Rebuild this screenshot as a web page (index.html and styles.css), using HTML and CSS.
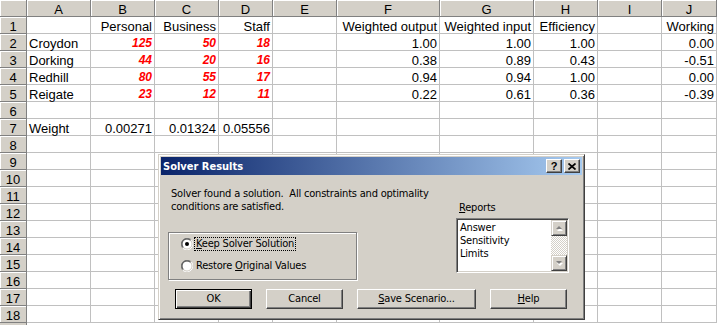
FILE: index.html
```html
<!DOCTYPE html>
<html lang="en">
<head>
    <meta charset="UTF-8">
    <meta name="viewport" content="width=device-width, initial-scale=1.0">
    <title>Solver Results</title>
    <link rel="stylesheet" href="styles.css">
</head>
<body>
    <div class="sheet" id="sheet"></div>

    <div class="dialog">
        <div class="titlebar">
            <span class="title">Solver Results</span>
            <span class="tb-btn">?</span>
            <span class="tb-btn">
                <svg width="8" height="7" viewBox="0 0 8 7"><path d="M0.5 0.5 L7.5 6.5 M7.5 0.5 L0.5 6.5" stroke="#000" stroke-width="1.7" fill="none"/></svg>
            </span>
        </div>

        <div class="dlg-body">
            <div class="dlg-left">
                <p class="message">Solver found a solution.&nbsp; All constraints and optimality<br>conditions are satisfied.</p>
                <div class="group">
                    <div class="radio">
                        <svg width="12" height="12" viewBox="0 0 12 12">
                            <circle cx="6" cy="6" r="5" fill="#fff"/>
                            <path d="M10.24 1.76 A6 6 0 0 0 1.76 10.24" stroke="#808080" fill="none"/>
                            <path d="M1.76 10.24 A6 6 0 0 0 10.24 1.76" stroke="#fff" fill="none"/>
                            <path d="M9.54 2.46 A5 5 0 0 0 2.46 9.54" stroke="#404040" fill="none"/>
                            <path d="M2.46 9.54 A5 5 0 0 0 9.54 2.46" stroke="#d4d0c8" fill="none"/>
                            <circle cx="6" cy="6" r="2" fill="#000"/>
                        </svg>
                        <span class="focus"><u>K</u>eep Solver Solution</span>
                    </div>
                    <div class="radio">
                        <svg width="12" height="12" viewBox="0 0 12 12">
                            <circle cx="6" cy="6" r="5" fill="#fff"/>
                            <path d="M10.24 1.76 A6 6 0 0 0 1.76 10.24" stroke="#808080" fill="none"/>
                            <path d="M1.76 10.24 A6 6 0 0 0 10.24 1.76" stroke="#fff" fill="none"/>
                            <path d="M9.54 2.46 A5 5 0 0 0 2.46 9.54" stroke="#404040" fill="none"/>
                            <path d="M2.46 9.54 A5 5 0 0 0 9.54 2.46" stroke="#d4d0c8" fill="none"/>
                        </svg>
                        <span class="label">Restore <u>O</u>riginal Values</span>
                    </div>
                </div>
            </div>

            <div class="dlg-right">
                <div class="reports-label"><u>R</u>eports</div>
                <div class="listbox">
                    <ul class="items">
                        <li>Answer</li>
                        <li>Sensitivity</li>
                        <li>Limits</li>
                    </ul>
                    <div class="scrollbar">
                        <span class="sb-btn">
                            <svg width="8" height="5" viewBox="0 0 8 5"><path d="M4 1 L7 4 L1 4 Z" fill="#fff" transform="translate(1 1)"/><path d="M4 0 L7 3 L1 3 Z" fill="#808080"/></svg>
                        </span>
                        <span class="sb-track"></span>
                        <span class="sb-btn">
                            <svg width="8" height="5" viewBox="0 0 8 5"><path d="M1 1 L7 1 L4 4 Z" fill="#fff" transform="translate(1 1)"/><path d="M1 0 L7 0 L4 3 Z" fill="#808080"/></svg>
                        </span>
                    </div>
                </div>
            </div>
        </div>

        <div class="buttons">
            <span class="btn default">OK</span>
            <span class="btn">Cancel</span>
            <span class="btn wide"><u>S</u>ave Scenario...</span>
            <span class="btn"><u>H</u>elp</span>
        </div>
    </div>

    <script>
        const columnas = ['A', 'B', 'C', 'D', 'E', 'F', 'G', 'H', 'I', 'J'];
        const datos = {
            1: ['', 'Personal', 'Business', 'Staff', '', 'Weighted output', 'Weighted input', 'Efficiency', '', 'Working'],
            2: ['Croydon', '125', '50', '18', '', '1.00', '1.00', '1.00', '', '0.00'],
            3: ['Dorking', '44', '20', '16', '', '0.38', '0.89', '0.43', '', '-0.51'],
            4: ['Redhill', '80', '55', '17', '', '0.94', '0.94', '1.00', '', '0.00'],
            5: ['Reigate', '23', '12', '11', '', '0.22', '0.61', '0.36', '', '-0.39'],
            7: ['Weight', '0.00271', '0.01324', '0.05556', '', '', '', '', '', '']
        };

        const sheet = document.getElementById('sheet');
        let html = '<div class="cell head"></div>';
        columnas.forEach(c => html += `<div class="cell head">${c}</div>`);

        for (let r = 1; r <= 18; r++) {
            html += `<div class="cell head">${r}</div>`;
            const fila = datos[r] || [];
            for (let c = 0; c < columnas.length; c++) {
                const valor = fila[c] || '';
                let clase = 'cell';
                if (c > 0) clase += ' num';
                if (r >= 2 && r <= 5 && c >= 1 && c <= 3) clase += ' input';
                html += `<div class="${clase}">${valor}</div>`;
            }
        }
        sheet.innerHTML = html;
    </script>
</body>
</html>
```

FILE: styles.css
```css
* {
    box-sizing: border-box;
}
body {
    margin: 0;
    width: 717px;
    height: 325px;
    overflow: hidden;
    position: relative;
    background: #fff;
    font-family: 'Liberation Sans', Arial, sans-serif;
    color: #000;
}

/* hoja de calculo */
.sheet {
    display: grid;
    grid-template-columns: 27px 64px 64px 64px 54px 64px 103px 94px 64px 64px 55px;
    grid-auto-rows: 17px;
    height: 325px;
    font-size: 13px;
    background: linear-gradient(to right, #d4d0c8 26px, #808080 26px, #808080 27px, #fff 27px);
}
.cell {
    border-right: 1px solid #c0c0c0;
    border-bottom: 1px solid #c0c0c0;
    padding: 0 2px;
    line-height: 19px;
    white-space: nowrap;
}
.cell.num {
    text-align: right;
}
.cell.input {
    color: #ff0000;
    font-weight: bold;
    font-style: italic;
    font-size: 12px;
}
.cell.head {
    background: #d4d0c8;
    text-align: center;
    border-right-color: #808080;
    border-bottom-color: #808080;
    box-shadow: inset 1px 1px #fff;
    padding: 0;
}

/* ventana del solver */
.dialog {
    position: absolute;
    left: 158px;
    top: 154px;
    width: 427px;
    height: 166px;
    padding: 1px;
    background: #d4d0c8;
    border: 1px solid;
    border-color: #d4d0c8 #404040 #404040 #d4d0c8;
    box-shadow: inset 1px 1px #fff, inset -1px -1px #808080;
    font-family: 'DejaVu Sans Condensed', Tahoma, sans-serif;
    font-size: 11px;
    letter-spacing: -0.2px;
}
.dialog .titlebar {
    margin: 1px;
    height: 18px;
    display: flex;
    align-items: center;
    padding: 0 2px;
    background: linear-gradient(to right, #0a246a, #a6caf0);
    color: #fff;
    font-weight: bold;
    letter-spacing: 0;
}
.titlebar .title {
    flex: 1;
}
.tb-btn {
    width: 16px;
    height: 14px;
    margin-left: 2px;
    display: flex;
    align-items: center;
    justify-content: center;
    background: #d4d0c8;
    color: #000;
    border: 1px solid;
    border-color: #fff #404040 #404040 #fff;
    box-shadow: inset -1px -1px #808080;
    font-family: 'Liberation Sans', Arial, sans-serif;
    font-size: 11px;
    font-weight: bold;
}

.dlg-body {
    display: flex;
    padding: 11px 14px 0 8px;
}
.message {
    margin: 0;
    padding-left: 3px;
    line-height: 13px;
}
.group {
    margin-top: 19px;
    width: 189px;
    height: 48px;
    border: 1px solid #808080;
    box-shadow: inset 1px 1px #fff, 1px 1px #fff;
    padding: 3px 0 0 12px;
}
.radio {
    height: 16px;
    display: flex;
    align-items: center;
    margin-bottom: 6px;
}
.radio svg {
    margin-right: 1px;
}
.radio .focus,
.radio .label {
    padding: 0 1px;
    line-height: 12px;
    border: 1px dotted transparent;
}
.radio .focus {
    border-color: #000;
}

.dlg-right {
    margin-left: auto;
    margin-top: 14px;
    width: 113px;
}
.reports-label {
    padding-left: 3px;
    line-height: 13px;
}
.listbox {
    margin-top: 4px;
    height: 55px;
    display: flex;
    background: #fff;
    border: 1px solid;
    border-color: #808080 #fff #fff #808080;
    box-shadow: inset 1px 1px #404040, inset -1px -1px #d4d0c8;
    padding: 1px;
}
.items {
    list-style: none;
    margin: 0;
    padding: 1px 0 0 2px;
    flex: 1;
    line-height: 13px;
}
.scrollbar {
    width: 16px;
    display: flex;
    flex-direction: column;
}
.sb-btn {
    height: 16px;
    display: flex;
    align-items: center;
    justify-content: center;
    background: #d4d0c8;
    border: 1px solid;
    border-color: #d4d0c8 #404040 #404040 #d4d0c8;
    box-shadow: inset 1px 1px #fff, inset -1px -1px #808080;
}
.sb-track {
    flex: 1;
    background: repeating-conic-gradient(#d4d0c8 0 25%, #fff 0 50%) 0 0 / 2px 2px;
}

.buttons {
    display: flex;
    gap: 14px;
    margin-top: 9px;
    padding-left: 15px;
}
.btn {
    width: 77px;
    height: 20px;
    line-height: 18px;
    text-align: center;
    background: #d4d0c8;
    border: 1px solid;
    border-color: #fff #404040 #404040 #fff;
    box-shadow: inset -1px -1px #808080;
}
.btn.wide {
    width: 119px;
}
.btn.default {
    border-color: #000;
    box-shadow: inset 1px 1px #fff, inset -1px -1px #404040, inset -2px -2px #808080;
}
```
